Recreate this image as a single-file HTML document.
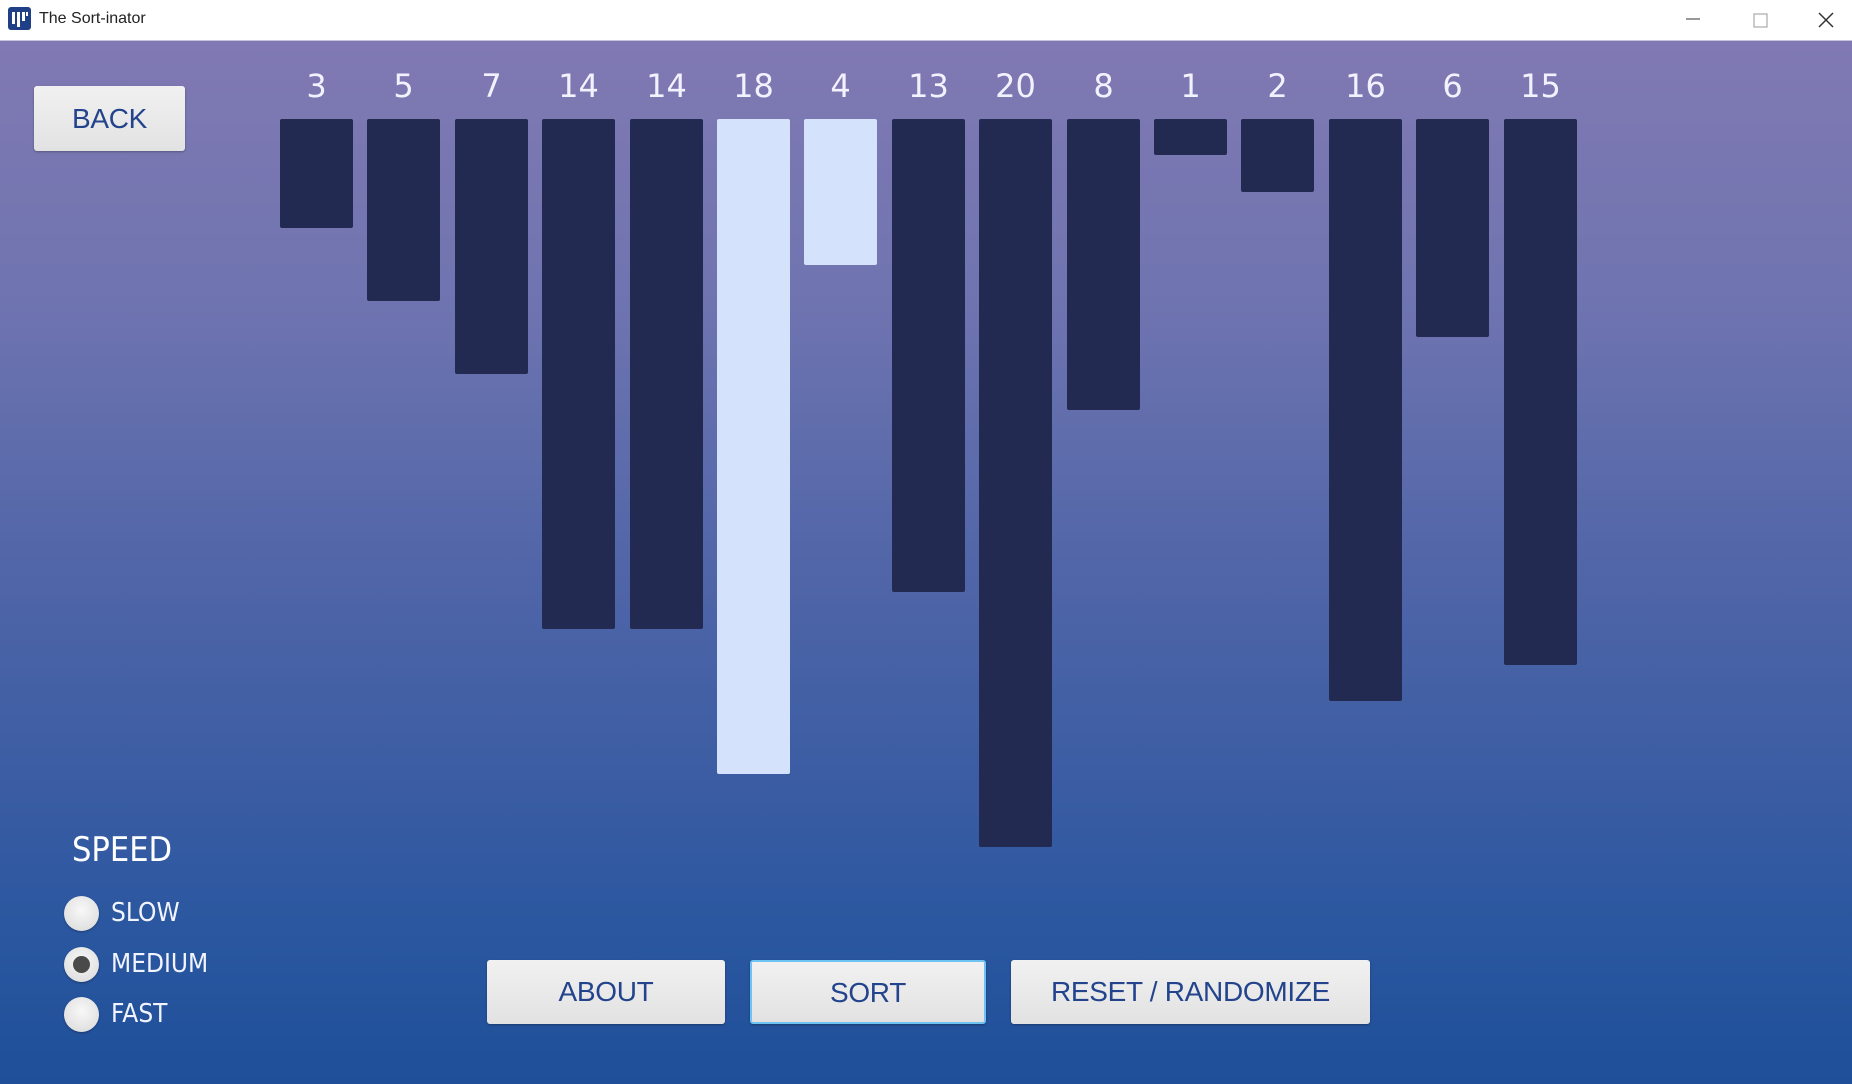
<!DOCTYPE html>
<html><head><meta charset="utf-8"><style>
*{margin:0;padding:0;box-sizing:border-box}
html,body{width:1852px;height:1084px;overflow:hidden}
body{position:relative;font-family:"Liberation Sans",sans-serif;background:#fff}
#tb{position:absolute;left:0;top:0;width:1852px;height:41px;background:#fff;border-bottom:1px solid #c9c4dc}
#tb .t{position:absolute;left:39px;top:10px;font-size:16px;color:#222}
#main{position:absolute;left:0;top:41px;width:1852px;height:1043px;background:linear-gradient(180deg,#8079b3 0%,#6f74b0 25%,#5166a8 50%,#3a5ca3 72%,#2a57a0 85%,#1f4f99 100%)}
.btn{position:absolute;background:linear-gradient(#f1f1f1,#e2e2e2);border-radius:3px;color:#23448c;font-size:28px;text-align:center;box-shadow:0 1px 2px rgba(0,0,0,.3);letter-spacing:-0.3px}
.num{position:absolute;top:67px;width:73px;text-align:center;color:#f2f2ff;font-size:32px;font-family:"DejaVu Sans","Liberation Sans",sans-serif}
.bar{position:absolute;top:119px;width:73px;background:#232a52;border-radius:2px}
.bar.h{background:#d4e3fb}
.rad{position:absolute;left:64px;width:35px;height:35px;border-radius:50%;background:radial-gradient(circle at 50% 40%,#f8f8f8,#d8d8d8);box-shadow:0 1px 2px rgba(0,0,0,.3)}
.lab{position:absolute;left:111px;color:#f2f4ff;font-size:26px;font-family:"DejaVu Sans","Liberation Sans",sans-serif;transform:scaleX(.9);transform-origin:left}
</style></head><body>
<div id="tb">
<svg style="position:absolute;left:8px;top:7px" width="23" height="23"><rect width="23" height="23" rx="3" fill="#1f3f86"/><rect x="4" y="5" width="3" height="12" fill="#fff"/><rect x="9" y="5" width="3" height="15" fill="#fff"/><rect x="14" y="5" width="3" height="9" fill="#fff"/><rect x="18" y="5" width="2" height="4" fill="#fff"/></svg>
<div class="t">The Sort-inator</div>
<svg style="position:absolute;left:1680px;top:10px" width="172" height="22"><line x1="6" y1="9" x2="20" y2="9" stroke="#555" stroke-width="1.2"/><rect x="74" y="4" width="13" height="13" fill="none" stroke="#aaa" stroke-width="1.2"/><path d="M139 3 L153 17 M153 3 L139 17" stroke="#333" stroke-width="1.5"/></svg>
</div>
<div id="main">
<div class="btn" style="left:34px;top:45px;width:151px;height:65px;line-height:65px">BACK</div>
</div>
<div id="bars"></div>
<div style="position:absolute;left:72px;top:830px;color:#fff;font-size:34px;font-family:'DejaVu Sans','Liberation Sans',sans-serif;transform:scaleX(.9);transform-origin:left">SPEED</div>
<div class="rad" style="top:896px"></div><div class="lab" style="top:898px">SLOW</div>
<div class="rad" style="top:947px"><div style="position:absolute;left:9px;top:9px;width:17px;height:17px;border-radius:50%;background:#4a4a4a"></div></div><div class="lab" style="top:949px">MEDIUM</div>
<div class="rad" style="top:997px"></div><div class="lab" style="top:999px">FAST</div>
<div class="btn" style="left:487px;top:960px;width:238px;height:64px;line-height:64px">ABOUT</div>
<div class="btn" style="left:750px;top:960px;width:236px;height:64px;line-height:62px;border:2px solid #6fc3f2">SORT</div>
<div class="btn" style="left:1011px;top:960px;width:359px;height:64px;line-height:64px">RESET / RANDOMIZE</div>
<script>
var v=[3,5,7,14,14,18,4,13,20,8,1,2,16,6,15],h='';
for(var i=0;i<v.length;i++){var x=Math.round(280+i*87.4);
h+='<div class="num" style="left:'+x+'px">'+v[i]+'</div><div class="bar'+(i==5||i==6?' h':'')+'" style="left:'+x+'px;height:'+Math.round(v[i]*36.4)+'px"></div>';}
document.getElementById('bars').innerHTML=h;
</script>
</body></html>
